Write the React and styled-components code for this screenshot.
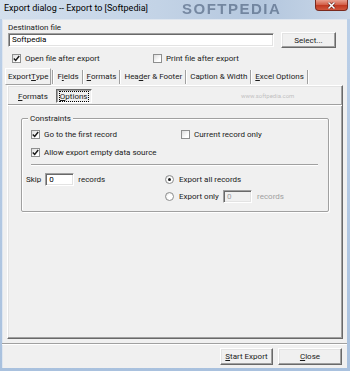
import React from 'react';
import styled, { createGlobalStyle } from 'styled-components';

const FONT = `Roboto, "Liberation Sans", Arial, sans-serif`;

const Global = createGlobalStyle`
  html, body { margin: 0; padding: 0; background: #fff; }
  body { width: 350px; height: 371px; overflow: hidden; }
`;

const Window = styled.div`
  position: relative;
  width: 350px;
  height: 371px;
  box-sizing: border-box;
  background: linear-gradient(#bcd0e8, #a9c1de);
  padding: 0 3px 3px 2px;
  display: flex;
  flex-direction: column;
  font-family: ${FONT};
  font-size: 8px;
  color: #1a1a1a;
  overflow: hidden;
`;

const TitleBar = styled.div`
  position: relative;
  height: 19px;
  flex: none;
  margin: 0 -3px 0 -2px;
  padding: 3px 0 0 4px;
  box-sizing: border-box;
  background: linear-gradient(90deg, #d3dfed 0%, #c3d3e6 45%, #b4c7de 75%, #c9d7e8 100%);
`;

const TitleText = styled.div`
  font-size: 9px;
  line-height: 11px;
  color: #000;
  white-space: nowrap;
  position: relative;
  z-index: 2;
`;

const TitleMark = styled.div`
  position: absolute;
  left: 182px;
  top: 0;
  height: 19px;
  font-family: "Liberation Sans", Arial, sans-serif;
  font-weight: bold;
  font-size: 15px;
  line-height: 17px;
  letter-spacing: 1.5px;
  color: rgba(45, 65, 95, 0.5);
  filter: blur(0.7px);
  z-index: 1;
  white-space: nowrap;
`;

const CloseBtn = styled.div`
  position: absolute;
  right: 2px;
  top: 0;
  width: 33px;
  height: 11px;
  box-sizing: border-box;
  border: 1px solid #7a2a1e;
  border-top: none;
  border-radius: 0 0 4px 4px;
  background: linear-gradient(#e9a08f 0%, #d4634c 45%, #c13a22 55%, #d0573d 100%);
  display: flex;
  align-items: center;
  justify-content: center;
  z-index: 3;
`;

const Client = styled.div`
  flex: 1;
  background: #f0f0f0;
  display: flex;
  flex-direction: column;
  position: relative;
  box-shadow: inset 1px 1px 0 #dfe6ef;
`;

const TopArea = styled.div`
  padding: 3px 0 0 6px;
  display: flex;
  flex-direction: column;
`;

const Label = styled.div`
  line-height: 11px;
  height: 11px;
  white-space: nowrap;
`;

const FileRow = styled.div`
  display: flex;
  align-items: center;
  gap: 7px;
  height: 16px;
  margin-top: -1px;
`;

const TextBox = styled.div`
  width: ${p => p.$w}px;
  height: ${p => p.$h}px;
  box-sizing: border-box;
  background: ${p => (p.$disabled ? '#f0f0f0' : '#fff')};
  border: 1px solid;
  border-color: #a0a0a0 #fff #fff #a0a0a0;
  box-shadow: inset 1px 1px 0 #696969, inset -1px -1px 0 #e3e3e3;
  padding-left: 3px;
  line-height: ${p => p.$h - 2}px;
  color: ${p => (p.$disabled ? '#a0a0a0' : '#000')};
  white-space: nowrap;
  flex: none;
`;

const Button = styled.div`
  width: ${p => p.$w}px;
  height: ${p => p.$h}px;
  box-sizing: border-box;
  border: 1px solid;
  border-color: #fff #696969 #696969 #fff;
  box-shadow: inset -1px -1px 0 #a0a0a0, inset 1px 1px 0 #e3e3e3;
  background: #f0f0f0;
  display: flex;
  align-items: center;
  justify-content: center;
  white-space: nowrap;
  flex: none;
`;

const CheckRow = styled.div`
  display: flex;
  align-items: center;
  height: 12px;
  margin-top: 4px;
  padding-left: 4px;
`;

const CheckItem = styled.div`
  display: flex;
  align-items: center;
  gap: 4px;
  white-space: nowrap;
  width: ${p => (p.$w ? `${p.$w}px` : 'auto')};
  flex: none;
`;

const Box = styled.div`
  width: 9px;
  height: 9px;
  box-sizing: border-box;
  border: 1px solid #8e8f8f;
  background: linear-gradient(135deg, #dcdcdc, #fff 70%);
  display: flex;
  align-items: center;
  justify-content: center;
  flex: none;
`;

const Radio = styled.div`
  width: 9px;
  height: 9px;
  box-sizing: border-box;
  border-radius: 50%;
  border: 1px solid #8e8f8f;
  background: radial-gradient(circle at 60% 60%, #fff 40%, #d8d8d8 100%);
  display: flex;
  align-items: center;
  justify-content: center;
  flex: none;
  &::after {
    content: '';
    display: ${p => (p.$on ? 'block' : 'none')};
    width: 3px;
    height: 3px;
    border-radius: 50%;
    background: #1b1b1b;
  }
`;

const TabStrip = styled.div`
  display: flex;
  align-items: stretch;
  height: 17px;
  margin-top: 4px;
  padding-left: 3px;
`;

const Tab = styled.div`
  display: flex;
  align-items: center;
  padding: 0 2px;
  white-space: nowrap;
  box-sizing: border-box;
  ${p =>
    p.$active
      ? `border: 1px solid; border-color: #fff #a0a0a0 #a0a0a0 #fff;`
      : ``}
`;

const Sep = styled.div`
  width: 1px;
  margin: 2px 2px 1px 1px;
  background: #a0a0a0;
  box-shadow: 1px 0 0 #fff;
  flex: none;
`;

const U = styled.span`
  text-decoration: underline;
  text-underline-offset: 1px;
`;

const PagePanel = styled.div`
  margin: 0 4px 0 5px;
  height: 254px;
  box-sizing: border-box;
  border: 1px solid;
  border-color: #fff #696969 #696969 #fff;
  box-shadow: inset -1px -1px 0 #a0a0a0, inset 1px 1px 0 #e3e3e3;
  display: flex;
  flex-direction: column;
  position: relative;
`;

const SubTabs = styled.div`
  display: flex;
  align-items: center;
  height: 14px;
  margin-top: 3px;
  padding-left: 7px;
  gap: 5px;
`;

const SubTab = styled.div`
  height: 14px;
  box-sizing: border-box;
  display: flex;
  align-items: center;
  padding: 0 3px;
  white-space: nowrap;
  ${p =>
    p.$active
      ? `border: 1px solid; border-color: #696969 #fff #fff #696969; box-shadow: inset 1px 1px 0 #a0a0a0;`
      : ``}
`;

const Focus = styled.span`
  outline: 1px dotted #000;
  outline-offset: 0px;
  line-height: 9px;
`;

const SubPage = styled.div`
  margin-top: 1px;
  border-top: 1px solid #a0a0a0;
  box-shadow: inset 0 1px 0 #fff;
  padding: 13px 0 0 13px;
  flex: 1;
`;

const GroupBox = styled.div`
  position: relative;
  width: 308px;
  height: 94px;
  box-sizing: border-box;
  border: 1px solid #a0a0a0;
  border-radius: 2px;
  box-shadow: inset 1px 1px 0 #fff, 1px 1px 0 #fff;
  padding: 9px 0 0 9px;
`;

const Legend = styled.div`
  position: absolute;
  left: 6px;
  top: -6px;
  padding: 0 2px;
  background: #f0f0f0;
  line-height: 11px;
`;

const GRow = styled.div`
  display: flex;
  align-items: center;
  height: 12px;
  margin-bottom: ${p => p.$mb || 0}px;
`;

const Divider = styled.div`
  height: 1px;
  width: 287px;
  background: #a0a0a0;
  box-shadow: 0 1px 0 #fff;
  margin: 6px 0 7px 0;
`;

const SkipRow = styled.div`
  display: flex;
  margin-left: -5px;
`;

const SkipLeft = styled.div`
  display: flex;
  align-items: center;
  gap: 4px;
  width: 139px;
  height: 14px;
  white-space: nowrap;
`;

const RadioCol = styled.div`
  display: flex;
  flex-direction: column;
  gap: 3px;
`;

const RadioItem = styled.div`
  display: flex;
  align-items: center;
  gap: 5px;
  height: 14px;
  white-space: nowrap;
`;

const RadioLabel = styled.span`
  width: ${p => (p.$w ? `${p.$w}px` : 'auto')};
`;

const Gray = styled.span`
  color: #a0a0a0;
`;

const ButtonBar = styled.div`
  margin-top: 4px;
  flex: 1;
  border-top: 1px solid #a0a0a0;
  box-shadow: inset 0 1px 0 #fff;
  display: flex;
  justify-content: flex-end;
  align-items: flex-start;
  padding: 4px 5px 0 0;
  gap: 5px;
`;

const Watermark = styled.div`
  position: absolute;
  left: ${p => p.$x}px;
  top: ${p => p.$y}px;
  font-size: ${p => p.$s}px;
  color: ${p => p.$c};
  white-space: nowrap;
  pointer-events: none;
  z-index: 5;
`;

const Check = () => (
  <svg width="7" height="7" viewBox="0 0 7 7">
    <path d="M0.8 3.4 L2.7 5.4 L6.2 1" fill="none" stroke="#1a1a1a" strokeWidth="1.5" />
  </svg>
);

export default function App() {
  return (
    <>
      <Global />
      <Window>
        <TitleBar>
          <TitleText>Export dialog -- Export to [Softpedia]</TitleText>
          <TitleMark>SOFTPEDIA</TitleMark>
          <CloseBtn>
            <svg width="9" height="7" viewBox="0 0 9 7">
              <path d="M1.5 0.5 L7.5 6.5 M7.5 0.5 L1.5 6.5" stroke="#5a1a10" strokeWidth="2.6" />
              <path d="M1.5 0.5 L7.5 6.5 M7.5 0.5 L1.5 6.5" stroke="#fff" strokeWidth="1.5" />
            </svg>
          </CloseBtn>
        </TitleBar>
        <Client>
          <TopArea>
            <Label>Destination file</Label>
            <FileRow>
              <TextBox $w={266} $h={14}>Softpedia</TextBox>
              <Button $w={55} $h={16}>Select...</Button>
            </FileRow>
            <CheckRow>
              <CheckItem $w={141}>
                <Box><Check /></Box>
                <span>Open file after export</span>
              </CheckItem>
              <CheckItem>
                <Box />
                <span>Print file after export</span>
              </CheckItem>
            </CheckRow>
          </TopArea>
          <TabStrip>
            <Tab $active>Export <U>T</U>ype</Tab>
            <Sep />
            <Tab>F<U>i</U>elds</Tab>
            <Sep />
            <Tab><U>F</U>ormats</Tab>
            <Sep />
            <Tab>Hea<U>d</U>er &amp; Footer</Tab>
            <Sep />
            <Tab>Caption &amp; Width</Tab>
            <Sep />
            <Tab><U>E</U>xcel Options</Tab>
            <Sep />
          </TabStrip>
          <PagePanel>
            <SubTabs>
              <SubTab><U>F</U>ormats</SubTab>
              <SubTab $active><Focus><U>O</U>ptions</Focus></SubTab>
            </SubTabs>
            <SubPage>
              <GroupBox>
                <Legend>Constraints</Legend>
                <GRow $mb={6}>
                  <CheckItem $w={150}>
                    <Box><Check /></Box>
                    <span>Go to the first record</span>
                  </CheckItem>
                  <CheckItem>
                    <Box />
                    <span>Current record only</span>
                  </CheckItem>
                </GRow>
                <GRow>
                  <CheckItem>
                    <Box><Check /></Box>
                    <span>Allow export empty data source</span>
                  </CheckItem>
                </GRow>
                <Divider />
                <SkipRow>
                  <SkipLeft>
                    <span>Skip</span>
                    <TextBox $w={29} $h={13}>0</TextBox>
                    <span>records</span>
                  </SkipLeft>
                  <RadioCol>
                    <RadioItem>
                      <Radio $on />
                      <span>Export all records</span>
                    </RadioItem>
                    <RadioItem>
                      <Radio />
                      <RadioLabel $w={39}>Export only</RadioLabel>
                      <TextBox $w={29} $h={13} $disabled>0</TextBox>
                      <Gray>records</Gray>
                    </RadioItem>
                  </RadioCol>
                </SkipRow>
              </GroupBox>
            </SubPage>
          </PagePanel>
          <ButtonBar>
            <Button $w={53} $h={17}><span><U>S</U>tart Export</span></Button>
            <Button $w={64} $h={17}><span><U>C</U>lose</span></Button>
          </ButtonBar>
          <Watermark $x={239} $y={73} $s={6} $c="rgba(185,185,185,0.9)">www.softpedia.com</Watermark>
        </Client>
      </Window>
    </>
  );
}
